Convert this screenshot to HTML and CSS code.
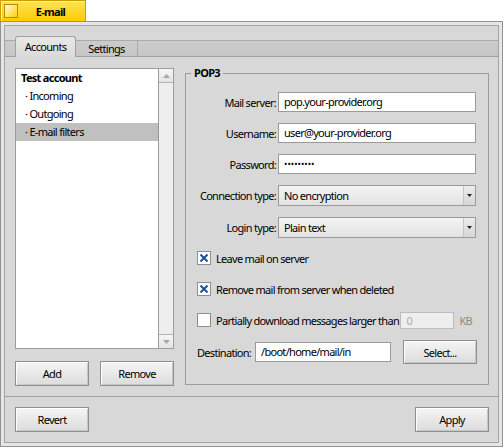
FILE: index.html
```html
<!DOCTYPE html>
<html>
<head>
<meta charset="utf-8">
<title>E-mail</title>
<link rel="stylesheet" href="styles.css">
</head>
<body>

<div class="wintab"><span class="closebox"></span><span class="wintitle">E-mail</span></div>

<div class="frame">
<div class="client">

  <div class="tabbar">
    <div class="tab active">Accounts</div>
    <div class="tab">Settings</div>
  </div>

  <div class="panel">
    <div class="leftcol">
      <div class="listbox">
        <ul class="items">
          <li class="acct">Test account</li>
          <li class="sub">· Incoming</li>
          <li class="sub">· Outgoing</li>
          <li class="sub sel">· E-mail filters</li>
        </ul>
        <div class="vscroll">
          <div class="arrow up"><svg width="7" height="4" viewBox="0 0 7 4"><path d="M0 4L3.5 0L7 4Z" fill="#a8a8a8"/></svg></div>
          <div class="arrow down"><svg width="7" height="4" viewBox="0 0 7 4"><path d="M0 0L3.5 4L7 0Z" fill="#a8a8a8"/></svg></div>
        </div>
      </div>
      <div class="btnrow">
        <button class="btn">Add</button>
        <button class="btn">Remove</button>
      </div>
    </div>

    <fieldset class="box">
      <legend>POP3</legend>
      <div class="boxbody">
        <div class="grid">
          <label>Mail server:</label>
          <div class="field">pop.your-provider.org</div>
          <label>Username:</label>
          <div class="field">user@your-provider.org</div>
          <label>Password:</label>
          <div class="field"><span class="dots">•••••••••</span></div>
          <label>Connection type:</label>
          <div class="menu"><span class="menutext">No encryption</span><span class="menuarrow"><svg width="5" height="3" viewBox="0 0 5 3"><path d="M0 0H5L2.5 3Z" fill="#222"/></svg></span></div>
          <label>Login type:</label>
          <div class="menu"><span class="menutext">Plain text</span><span class="menuarrow"><svg width="5" height="3" viewBox="0 0 5 3"><path d="M0 0H5L2.5 3Z" fill="#222"/></svg></span></div>
        </div>

        <div class="checks">
          <div class="check">
            <svg class="cb" width="14" height="14" viewBox="0 0 14 14"><rect x="0.5" y="0.5" width="13" height="13" fill="#fff" stroke="#8e8e8e"/><path d="M3.5 3.5L10.5 10.5M10.5 3.5L3.5 10.5" stroke="#1d4f9c" stroke-width="2"/></svg>
            <span>Leave mail on server</span>
          </div>
          <div class="check">
            <svg class="cb" width="14" height="14" viewBox="0 0 14 14"><rect x="0.5" y="0.5" width="13" height="13" fill="#fff" stroke="#8e8e8e"/><path d="M3.5 3.5L10.5 10.5M10.5 3.5L3.5 10.5" stroke="#1d4f9c" stroke-width="2"/></svg>
            <span>Remove mail from server when deleted</span>
          </div>
          <div class="check">
            <svg class="cb" width="14" height="14" viewBox="0 0 14 14"><rect x="0.5" y="0.5" width="13" height="13" fill="#fff" stroke="#8e8e8e"/></svg>
            <span>Partially download messages larger than</span>
            <div class="field off">0</div>
            <span class="unit">KB</span>
          </div>
        </div>

        <div class="dest">
          <label class="destlabel">Destination:</label>
          <div class="field destfield">/boot/home/mail/in</div>
          <button class="btn select">Select...</button>
        </div>
      </div>
    </fieldset>
  </div>

  <div class="footer">
    <button class="btn">Revert</button>
    <button class="btn">Apply</button>
  </div>

</div>
</div>

</body>
</html>
```

FILE: styles.css
```css
body {
    margin: 0;
    background-color: #ffffff;
    font-family: "Noto Sans", "DejaVu Sans", sans-serif;
    font-size: 11px;
    letter-spacing: -0.7px;
    color: #000000;
}

/* window tab */
.wintab {
    width: 86px;
    height: 21px;
    box-sizing: border-box;
    display: flex;
    align-items: center;
    padding-left: 3px;
    background: linear-gradient(#ffe258, #ffcb00);
    border: 1px solid #c9a000;
    border-bottom: none;
    box-shadow: inset 1px 1px #fff0a0;
}
.closebox {
    width: 14px;
    height: 14px;
    box-sizing: border-box;
    border: 1px solid #b48e00;
    background: linear-gradient(135deg, #fffbe4, #ffd000);
}
.wintitle {
    flex: 1;
    text-align: center;
    font-weight: bold;
    padding-right: 2px;
}

/* window frame */
.frame {
    height: 426px;
    box-sizing: border-box;
    border: 1px solid #929292;
    padding: 3px;
    background-color: #e6e6e6;
}
.client {
    height: 100%;
    box-sizing: border-box;
    border: 1px solid #a4a4a4;
    background-color: #d8d8d8;
    display: flex;
    flex-direction: column;
}

/* tabs */
.tabbar {
    flex: none;
    margin-top: 10px;
    height: 21px;
    display: flex;
    padding-left: 10px;
    background: linear-gradient(#d8d8d8 4px, #a9a9a9 4px, #a9a9a9 5px, #cccccc 5px, #c6c6c6 20px, #a0a0a0 20px);
}
.tab {
    width: 62px;
    height: 15px;
    margin-top: 5px;
    line-height: 15px;
    box-sizing: border-box;
    text-align: center;
    border-right: 1px solid #a9a9a9;
}
.tab.active {
    width: 61px;
    height: 21px;
    margin-top: 0;
    line-height: 20px;
    background: linear-gradient(#e8e8e8, #dadada);
    border: 1px solid #a0a0a0;
    border-bottom: none;
    border-radius: 3px 3px 0 0;
}

.panel {
    flex: none;
    height: 340px;
    box-sizing: border-box;
    padding: 11px 9px 10px 10px;
    border-bottom: 1px solid #a0a0a0;
    display: flex;
    gap: 11px;
}

/* left column */
.leftcol {
    width: 159px;
    flex: none;
    display: flex;
    flex-direction: column;
    gap: 12px;
}
.listbox {
    flex: 1;
    display: flex;
    border: 1px solid #9c9c9c;
    background-color: #ffffff;
}
.items {
    flex: 1;
    list-style: none;
    margin: 0;
    padding: 0;
}
.items li {
    height: 18px;
    line-height: 18px;
    padding-left: 5px;
    white-space: nowrap;
}
.items .acct { font-weight: bold; }
.items .sub { padding-left: 9px; }
.items .sel { background-color: #c0c0c0; }

.vscroll {
    width: 14px;
    flex: none;
    border-left: 1px solid #9c9c9c;
    background-color: #eeeeee;
    display: flex;
    flex-direction: column;
}
.arrow {
    height: 14px;
    box-sizing: border-box;
    display: flex;
    align-items: center;
    justify-content: center;
    background: linear-gradient(#f6f6f6, #e4e4e4);
}
.arrow.up { border-bottom: 1px solid #b4b4b4; }
.arrow.down { border-top: 1px solid #b4b4b4; margin-top: auto; }

.btnrow {
    height: 25px;
    display: flex;
    justify-content: space-between;
}

/* buttons */
.btn {
    width: 74px;
    height: 25px;
    box-sizing: border-box;
    padding: 0;
    border: 1px solid #8f8f8f;
    background: linear-gradient(#f5f5f5, #dcdcdc);
    box-shadow: inset 1px 1px #ffffff, inset -1px -1px #c6c6c6;
    font: inherit;
    letter-spacing: inherit;
    color: #000000;
}

/* POP3 box */
.box {
    flex: 1;
    min-width: 0;
    align-self: flex-start;
    margin: 0;
    padding: 0;
    border: 1px solid #9c9c9c;
}
.box legend {
    margin-left: 5px;
    padding: 0 3px;
    line-height: 10px;
    font-weight: bold;
}
.boxbody {
    padding: 14px 11px 20px 11px;
}
.grid {
    display: grid;
    grid-template-columns: 79px 198px;
    grid-template-rows: 20px 20px 20px 21px 21px;
    column-gap: 2px;
    row-gap: 11px;
}
.grid label {
    justify-self: end;
    align-self: center;
    white-space: nowrap;
}
.field {
    box-sizing: border-box;
    height: 20px;
    line-height: 18px;
    padding-left: 5px;
    border: 1px solid #9a9a9a;
    background-color: #ffffff;
    white-space: nowrap;
}
.dots {
    font-size: 9px;
    letter-spacing: 0;
    vertical-align: top;
}
.menu {
    box-sizing: border-box;
    height: 21px;
    display: flex;
    border: 1px solid #9a9a9a;
    background: linear-gradient(#f4f4f4, #e2e2e2);
}
.menutext {
    flex: 1;
    line-height: 19px;
    padding-left: 5px;
}
.menuarrow {
    width: 11px;
    display: flex;
    align-items: center;
    justify-content: center;
    border-left: 1px solid #c4c4c4;
    background: linear-gradient(#ececec, #d6d6d6);
}

.checks {
    margin-top: 10px;
    display: flex;
    flex-direction: column;
    gap: 11px;
}
.check {
    height: 20px;
    display: flex;
    align-items: center;
    white-space: nowrap;
}
.cb {
    flex: none;
    margin-right: 5px;
}
.field.off {
    width: 54px;
    height: 17px;
    line-height: 15px;
    margin-left: auto;
    background-color: #eeeeee;
    border-color: #bcbcbc;
    color: #a8a8a8;
}
.unit {
    color: #8a8a8a;
    margin-left: 5px;
    margin-right: 5px;
}

.dest {
    margin-top: 10px;
    height: 24px;
    display: flex;
    align-items: center;
}
.destlabel { width: 58px; }
.destfield { width: 136px; }
.btn.select {
    height: 24px;
    margin-left: auto;
}

/* bottom buttons */
.footer {
    flex: 1;
    display: flex;
    justify-content: space-between;
    align-items: flex-start;
    padding: 10px 9px 0 10px;
}
```
